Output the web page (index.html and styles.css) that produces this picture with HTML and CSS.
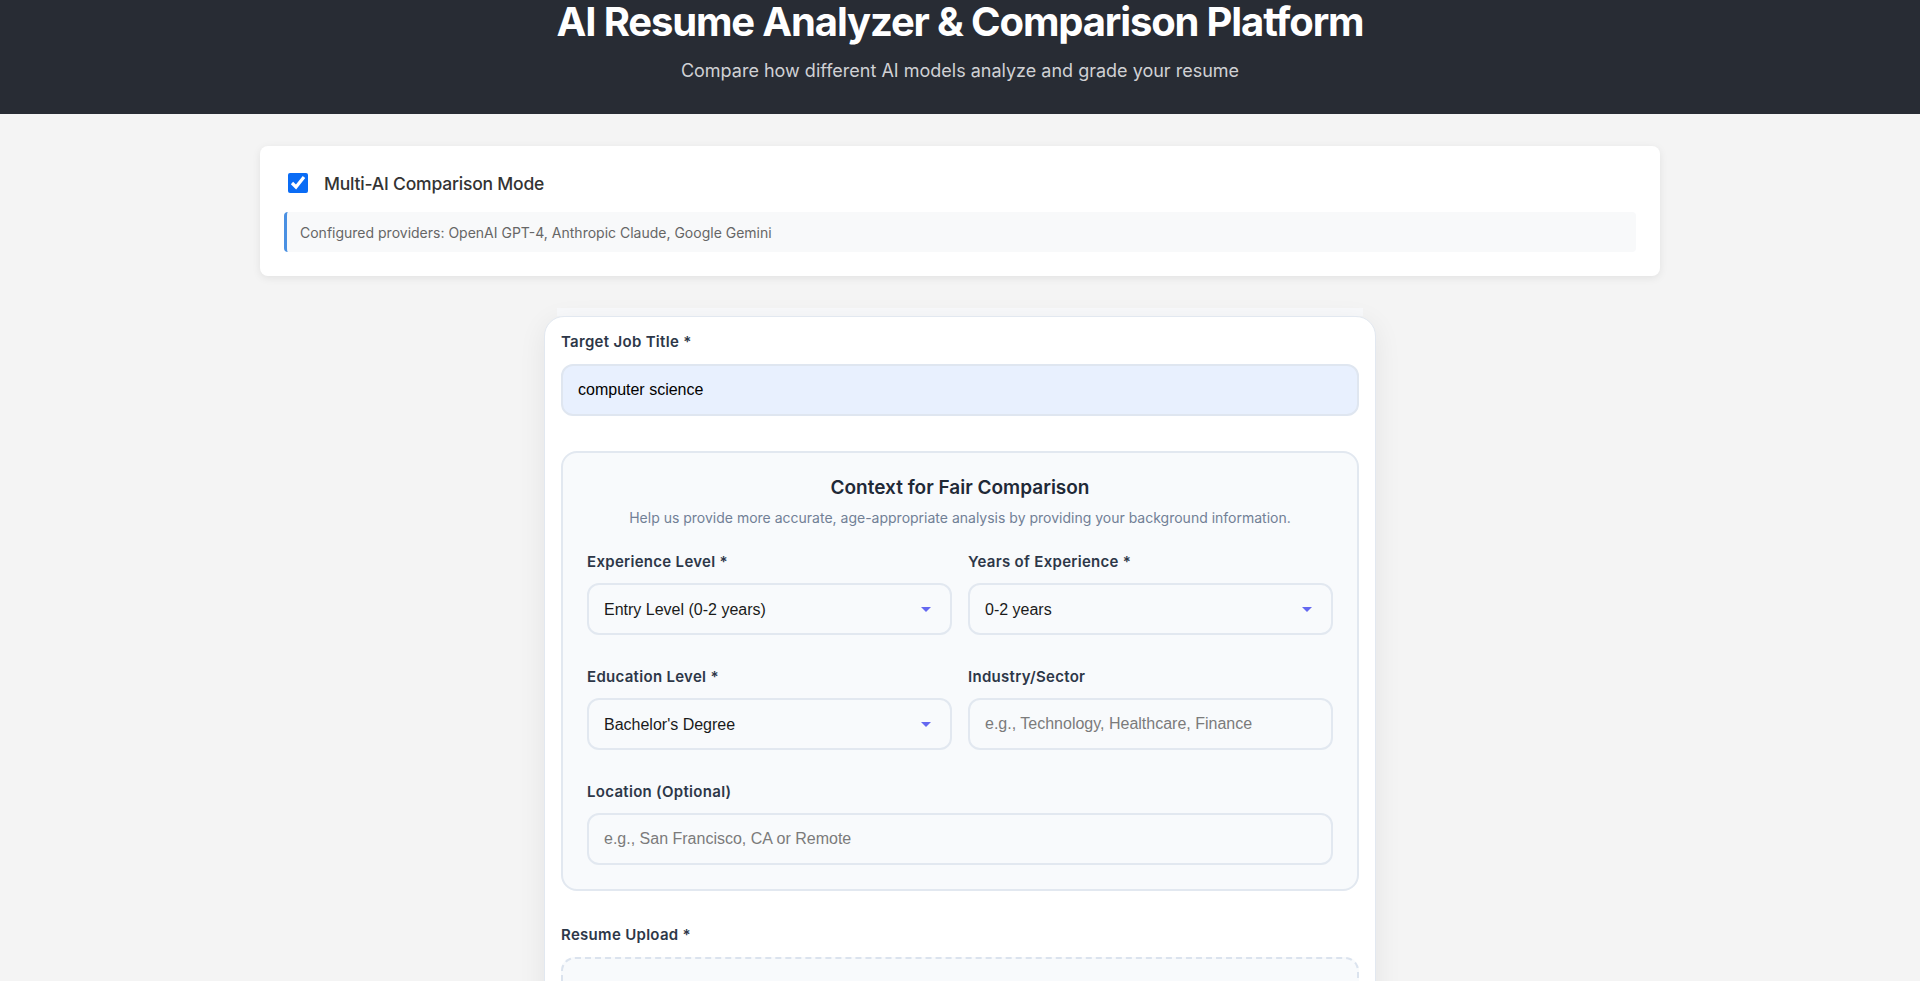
FILE: index.html
```html
<!DOCTYPE html>
<html>
	<head>
		<meta charset="utf-8">
		<title>AI Resume Analyzer</title>
		<link rel="stylesheet" href="styles.css">
	</head>
	<body>
		<header class="app-header">
			<h1>AI Resume Analyzer &amp; Comparison Platform</h1>
			<p>Compare how different AI models analyze and grade your resume</p>
		</header>

		<main class="container">
			<section class="mode-card">
				<label class="mode-toggle">
					<input type="checkbox" checked>
					<span>Multi-AI Comparison Mode</span>
				</label>
				<div class="providers">Configured providers: OpenAI GPT-4, Anthropic Claude, Google Gemini</div>
			</section>

			<div class="form-strip"></div>
			<form class="upload-card">
				<div class="form-group">
					<label for="jobTitle">Target Job Title *</label>
					<input type="text" id="jobTitle" class="field field-filled" value="computer science">
				</div>

				<div class="context-box">
					<h3>Context for Fair Comparison</h3>
					<p class="context-desc">Help us provide more accurate, age-appropriate analysis by providing your background information.</p>
					<div class="context-grid">
						<div class="form-group">
							<label for="expLevel">Experience Level *</label>
							<select id="expLevel" class="field field-select">
								<option>Entry Level (0-2 years)</option>
							</select>
						</div>
						<div class="form-group">
							<label for="expYears">Years of Experience *</label>
							<select id="expYears" class="field field-select">
								<option>0-2 years</option>
							</select>
						</div>
						<div class="form-group">
							<label for="eduLevel">Education Level *</label>
							<select id="eduLevel" class="field field-select">
								<option>Bachelor's Degree</option>
							</select>
						</div>
						<div class="form-group">
							<label for="industry">Industry/Sector</label>
							<input type="text" id="industry" class="field" placeholder="e.g., Technology, Healthcare, Finance">
						</div>
						<div class="form-group wide">
							<label for="location">Location (Optional)</label>
							<input type="text" id="location" class="field" placeholder="e.g., San Francisco, CA or Remote">
						</div>
					</div>
				</div>

				<div class="form-group">
					<label>Resume Upload *</label>
					<div class="drop-zone"></div>
				</div>
			</form>
		</main>
	</body>
</html>
```

FILE: styles.css
```css
body{
	margin: 0;
	background: #f4f4f4;
	font-family: Inter, "Noto Sans", sans-serif;
	color: #2d3748;
}
.app-header{
	background: #282c34;
	color: #fff;
	text-align: center;
	height: 114px;
	padding-top: 1px;
	box-sizing: border-box;
}
.app-header h1{
	margin: 0;
	font-size: 40px;
	line-height: 42px;
	font-weight: 700;
	letter-spacing: -1.15px;
}
.app-header p{
	margin: 14px 0 0;
	font-size: 18px;
	line-height: 27px;
	color: #d0d1d4;
}
.container{
	max-width: 1400px;
	margin: 32px auto 0;
}
.mode-card{
	background: #fff;
	border-radius: 8px;
	padding: 24px;
	box-shadow: 0 2px 8px rgba(0,0,0,0.08);
}
.mode-toggle{
	display: flex;
	align-items: center;
	gap: 16px;
	height: 26px;
	padding-left: 4px;
	font-size: 17.5px;
	font-weight: 500;
	letter-spacing: -0.2px;
	color: #333;
}
.mode-toggle input{
	width: 20px;
	height: 20px;
	margin: 0;
	accent-color: #0a6cf5;
}
.providers{
	margin-top: 16px;
	padding: 12px 13px 11px;
	line-height: 17px;
	background: #f8f9fa;
	border-left: 3px solid #4a90e2;
	border-radius: 4px;
	font-size: 14px;
	color: #666;
}
.form-strip{
	width: 806px;
	height: 8px;
	margin: 32px auto 0;
	background: #f8f9fb;
}
.upload-card{
	width: 798px;
	margin: 0 auto;
	padding: 16px;
	background: #fff;
	border: 1px solid #e2e8f0;
	border-radius: 20px;
	box-shadow: 0 6px 28px rgba(0,0,0,0.07);
}
.form-group{
	margin-bottom: 35px;
}
.form-group label{
	display: block;
	margin-bottom: 12.5px;
	font-size: 15px;
	line-height: 18px;
	font-weight: 600;
	letter-spacing: 0.3px;
	color: #2d3748;
}
.field{
	display: block;
	width: 100%;
	height: 52px;
	box-sizing: border-box;
	padding: 0 15px;
	border: 2px solid #e2e8f0;
	border-radius: 12px;
	background: #f8fafc;
	font-family: "Liberation Sans", Arial, sans-serif;
	font-size: 16px;
	color: #1a1a1a;
	outline: none;
}
.field::placeholder{
	color: #7b7b7b;
}
.field-filled{
	background: #e8f0fe;
	border-color: #dfe6f0;
	color: #000;
}
.field-select{
	appearance: none;
	background-image: url("data:image/svg+xml,%3Csvg xmlns='http://www.w3.org/2000/svg' width='10' height='5'%3E%3Cpath d='M0 0h10L5 5z' fill='%236468f0'/%3E%3C/svg%3E");
	background-repeat: no-repeat;
	background-position: right 19px center;
	background-size: 10px 5px;
}
.context-box{
	margin-bottom: 35px;
	padding: 24px;
	background: #f8fafc;
	border: 2px solid #e2e8f0;
	border-radius: 16px;
	text-align: center;
}
.context-box h3{
	margin: -1px 0 0;
	font-size: 19px;
	line-height: 24px;
	font-weight: 600;
	color: #1f2937;
}
.context-desc{
	margin: 9px 0 27px;
	font-size: 14px;
	color: #718096;
}
.context-grid{
	display: grid;
	grid-template-columns: 1fr 1fr;
	column-gap: 16px;
	row-gap: 32.5px;
	text-align: left;
}
.context-grid .form-group{
	margin-bottom: 0;
}
.context-grid .wide{
	grid-column: span 2;
}
.drop-zone{
	height: 180px;
	border: 2px dashed #dbe3ee;
	border-radius: 14px;
	background: #f8fafc;
}
```
